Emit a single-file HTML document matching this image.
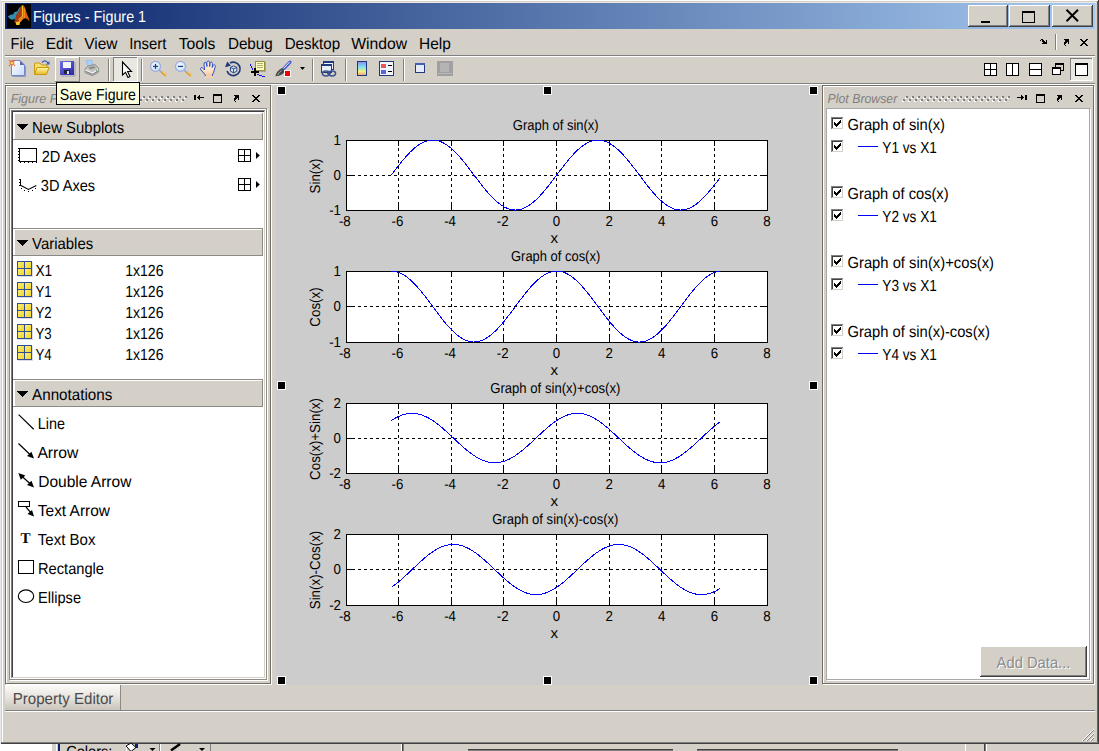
<!DOCTYPE html>
<html><head><meta charset="utf-8"><title>Figures - Figure 1</title>
<style>
html,body{margin:0;padding:0;background:#d4d0c8;overflow:hidden}
svg{display:block;position:absolute;left:0;top:0}
text{font-family:"Liberation Sans",sans-serif;white-space:pre;text-rendering:geometricPrecision}
rect,.ce{shape-rendering:crispEdges}
</style></head><body>
<svg width="1099" height="751" viewBox="0 0 1099 751">
<defs>
<linearGradient id="tg" x1="0" x2="1" y1="0" y2="0"><stop offset="0" stop-color="#0a246a"/><stop offset="1" stop-color="#a6caf0"/></linearGradient>
<linearGradient id="tabg" x1="0" x2="0" y1="0" y2="1"><stop offset="0" stop-color="#fdfcf9"/><stop offset="0.5" stop-color="#e6e3dd"/><stop offset="1" stop-color="#c9c5bc"/></linearGradient>
<linearGradient id="cbar" x1="0" x2="0" y1="0" y2="1"><stop offset="0" stop-color="#9080f0"/><stop offset="0.4" stop-color="#80e0f0"/><stop offset="0.7" stop-color="#f0f080"/><stop offset="1" stop-color="#f09080"/></linearGradient>
<linearGradient id="ycell" x1="0" x2="1" y1="0" y2="1"><stop offset="0" stop-color="#fbee7a"/><stop offset="1" stop-color="#f0d628"/></linearGradient>
<linearGradient id="flop" x1="0" x2="1" y1="0" y2="1"><stop offset="0" stop-color="#7070e8"/><stop offset="1" stop-color="#2828a0"/></linearGradient>
<linearGradient id="fold" x1="0" x2="0" y1="0" y2="1"><stop offset="0" stop-color="#fff8b0"/><stop offset="1" stop-color="#e8b820"/></linearGradient>
<linearGradient id="page" x1="0" x2="1" y1="0" y2="1"><stop offset="0" stop-color="#ffffff"/><stop offset="1" stop-color="#c8dcf8"/></linearGradient>
<radialGradient id="lensg" cx="0.45" cy="0.4" r="0.6"><stop offset="0" stop-color="#ffffff"/><stop offset="1" stop-color="#b4e6f0"/></radialGradient>
<linearGradient id="handg" x1="0" x2="0" y1="0" y2="1"><stop offset="0" stop-color="#fdeedd"/><stop offset="0.6" stop-color="#fde2c6"/><stop offset="1" stop-color="#f0c49c"/></linearGradient>
</defs>
<g>
<rect x="0" y="0" width="1099" height="751" fill="#d4d0c8" />
<rect x="0" y="0" width="1099" height="1" fill="#ffffff" />
<rect x="0" y="0" width="1" height="744" fill="#e8e8e8" />
<rect x="1" y="1" width="1096" height="1" fill="#d4d0c8" />
<rect x="1" y="1" width="1" height="742" fill="#d4d0c8" />
<rect x="2" y="2" width="1094" height="1" fill="#ece9e2" />
<rect x="2" y="2" width="1" height="740" fill="#ffffff" />
<rect x="4" y="3" width="1" height="26" fill="#e8e5dc" />
<rect x="1097" y="1" width="1" height="743" fill="#606060" />
<rect x="1098" y="0" width="1" height="744" fill="#404040" />
<rect x="1" y="742" width="1097" height="1" fill="#808080" />
<rect x="1" y="743" width="1098" height="1" fill="#404040" />
<rect x="5" y="3" width="1090" height="26" fill="url(#tg)" />
<rect x="7" y="4" width="24" height="24" fill="#000" />
<polygon points="7.8,16.4 10.5,14.8 13.5,14.2 14,12.3 17.3,11.3 18.8,8.5 20.6,6.2 20.6,9 19,12.8 16.5,15 16.5,18.8 11.5,19.8 9.5,18.6" fill="#3a9cc2" opacity="0.9"/>
<polygon points="14.3,21.5 16.5,15 19,10.5 21,6.3 22.2,5.2 22.2,19.5 20,22 17.5,24.5 15,23" fill="#a83a18"/>
<polygon points="21.9,5.2 23.5,5.4 23.5,18.3 21.9,20" fill="#f4b81c"/>
<polygon points="23.5,5.6 25,7.5 26.6,13 28.5,17.5 29.6,21.8 27.6,19.2 25.5,18.2 23.5,18.3" fill="#d85c18"/>
<polygon points="23.5,8 25,8.5 25.2,18.2 23.5,18.3" fill="#f08820"/>
<polygon points="18.5,18.5 22,16 23.5,18.3 21,21.5 19,23.2" fill="#e88420"/>
<polygon points="15.8,22 20,21.5 19.5,25 16.2,25" fill="#f8c828"/>
<text x="32.90" y="22.00" textLength="113.20" lengthAdjust="spacingAndGlyphs" fill="#fff" style="font-size:16px;" >Figures - Figure 1</text>
<rect x="968" y="5" width="40" height="22" fill="#d4d0c8" />
<rect x="968" y="5" width="40" height="1" fill="#ffffff" />
<rect x="968" y="5" width="1" height="22" fill="#ffffff" />
<rect x="968" y="26" width="40" height="1" fill="#404040" />
<rect x="1007" y="5" width="1" height="22" fill="#404040" />
<rect x="969" y="25" width="38" height="1" fill="#808080" />
<rect x="1006" y="6" width="1" height="20" fill="#808080" />
<rect x="1009" y="5" width="41" height="22" fill="#d4d0c8" />
<rect x="1009" y="5" width="41" height="1" fill="#ffffff" />
<rect x="1009" y="5" width="1" height="22" fill="#ffffff" />
<rect x="1009" y="26" width="41" height="1" fill="#404040" />
<rect x="1049" y="5" width="1" height="22" fill="#404040" />
<rect x="1010" y="25" width="39" height="1" fill="#808080" />
<rect x="1048" y="6" width="1" height="20" fill="#808080" />
<rect x="1052" y="5" width="41" height="22" fill="#d4d0c8" />
<rect x="1052" y="5" width="41" height="1" fill="#ffffff" />
<rect x="1052" y="5" width="1" height="22" fill="#ffffff" />
<rect x="1052" y="26" width="41" height="1" fill="#404040" />
<rect x="1092" y="5" width="1" height="22" fill="#404040" />
<rect x="1053" y="25" width="39" height="1" fill="#808080" />
<rect x="1091" y="6" width="1" height="20" fill="#808080" />
<rect x="981" y="21" width="9" height="2" fill="#000" />
<rect x="1022" y="11" width="13" height="12" fill="#000" />
<rect x="1023" y="13" width="11" height="9" fill="#d4d0c8" />
<path d="M1066.5 9.8 L1078 21.2 M1078 9.8 L1066.5 21.2" stroke="#000" stroke-width="2" fill="none"/>
<text x="10.60" y="49.00" textLength="23.40" lengthAdjust="spacingAndGlyphs" fill="#000" style="font-size:16px;" >File</text>
<text x="45.70" y="49.00" textLength="26.70" lengthAdjust="spacingAndGlyphs" fill="#000" style="font-size:16px;" >Edit</text>
<text x="84.20" y="49.00" textLength="33.20" lengthAdjust="spacingAndGlyphs" fill="#000" style="font-size:16px;" >View</text>
<text x="129.20" y="49.00" textLength="37.20" lengthAdjust="spacingAndGlyphs" fill="#000" style="font-size:16px;" >Insert</text>
<text x="178.70" y="49.00" textLength="36.70" lengthAdjust="spacingAndGlyphs" fill="#000" style="font-size:16px;" >Tools</text>
<text x="227.90" y="49.00" textLength="44.90" lengthAdjust="spacingAndGlyphs" fill="#000" style="font-size:16px;" >Debug</text>
<text x="284.70" y="49.00" textLength="55.40" lengthAdjust="spacingAndGlyphs" fill="#000" style="font-size:16px;" >Desktop</text>
<text x="351.20" y="49.00" textLength="55.90" lengthAdjust="spacingAndGlyphs" fill="#000" style="font-size:16px;" >Window</text>
<text x="419.00" y="49.00" textLength="31.80" lengthAdjust="spacingAndGlyphs" fill="#000" style="font-size:16px;" >Help</text>
<rect x="1055" y="34" width="1" height="16" fill="#808080" />
<rect x="1056" y="34" width="1" height="16" fill="#ffffff" />
<rect x="5" y="55" width="1090" height="1" fill="#808080" />
<rect x="5" y="56" width="1090" height="1" fill="#ffffff" />
<rect x="5" y="83" width="1090" height="1" fill="#808080" />
<rect x="5" y="84" width="1090" height="1" fill="#ffffff" />
<path d="M11.5 60.5 H20 L24.5 65 V75.5 H11.5 Z" fill="url(#page)" stroke="#7088d0" stroke-width="1"/>
<path d="M20 60.5 V65 H24.5 Z" fill="#5868b8"/>
<path d="M12.5 76.5 H25.5 V66" stroke="#7880a8" stroke-width="1" fill="none" opacity="0.7"/>
<circle cx="12" cy="63" r="1.9" fill="#f0d860" stroke="#e87040" stroke-width="1.1"/>
<path d="M9 60 l1 1 M15 60 l-1 1 M9 66 l1 -1 M15 66 l-1 -1" stroke="#e87040" stroke-width="1.1"/>
<path d="M34.5 74.5 V64 Q34.5 63 35.5 63 H40 L41.5 65 H47 V67" fill="#f8e070" stroke="#c89810" stroke-width="1"/>
<path d="M34.5 74.5 L37 67.5 H49 L46.5 74.5 Z" fill="url(#fold)" stroke="#c89810" stroke-width="1"/>
<path d="M42 62.5 Q45 59 48 63" stroke="#3858a8" stroke-width="1.2" fill="none"/><polygon points="46,64.5 49.5,64.5 49.5,61" fill="#3858a8"/>
<rect x="55" y="57" width="25" height="1" fill="#ffffff" />
<rect x="55" y="57" width="1" height="25" fill="#ffffff" />
<rect x="55" y="81" width="25" height="1" fill="#808080" />
<rect x="79" y="57" width="1" height="25" fill="#808080" />
<rect x="60" y="61" width="14" height="14" fill="url(#flop)" />
<rect x="63" y="62" width="8" height="6" fill="#f4f4fc" />
<rect x="64" y="70" width="6" height="4" fill="#202040" />
<rect x="67" y="71" width="2" height="3" fill="#e0e0f0" />
<path d="M61 76 H75 V62" stroke="#7878b0" stroke-width="1" fill="none" opacity="0.6"/>
<path d="M86 60.6 L91.4 60 L94 66.2 L88.2 67.3 Z" fill="#a8d0f8" stroke="#90b8e8" stroke-width="0.8"/>
<path d="M85 69.2 L87.6 66 L95 64.6 L98.6 68 V72 L92.6 75.6 L85 72.6 Z" fill="#c4c4c4" stroke="#8c8c8c" stroke-width="1"/>
<path d="M85.6 70 L92.6 73 L98.2 69.6" stroke="#f8f8f8" stroke-width="1.1" fill="none"/><path d="M85.6 71.4 L92.6 74.3 L98.2 70.9" stroke="#808080" stroke-width="0.9" fill="none"/>
<path d="M88 67.2 L94 66.2 L96 68 L90.5 69.6 Z" fill="#909090"/>
<rect x="96" y="70" width="1" height="1" fill="#40b040" />
<rect x="108" y="59" width="1" height="22" fill="#808080" />
<rect x="109" y="59" width="1" height="22" fill="#ffffff" />
<rect x="113" y="57" width="25" height="25" fill="#e9e7e2" />
<rect x="113" y="57" width="25" height="1" fill="#808080" />
<rect x="113" y="57" width="1" height="25" fill="#808080" />
<rect x="113" y="81" width="25" height="1" fill="#ffffff" />
<rect x="137" y="57" width="1" height="25" fill="#ffffff" />
<path d="M122.5 62 V75 L125.5 72.3 L128 77.5 L130 76.5 L127.6 71.5 H131.5 Z" fill="#fff" stroke="#000" stroke-width="1.1"/>
<rect x="141" y="59" width="1" height="22" fill="#808080" />
<rect x="142" y="59" width="1" height="22" fill="#ffffff" />
<path d="M159.1 70.0 L162.3 73.0" stroke="#9ca0cc" stroke-width="1.4"/>
<path d="M161.7 72.0 L166.1 75.80000000000001" stroke="#e8a030" stroke-width="2.6"/>
<path d="M162.4 71.60000000000001 L166.7 75.30000000000001" stroke="#f8deb0" stroke-width="0.8"/>
<circle cx="155.5" cy="66.4" r="5" fill="url(#lensg)" stroke="#a4a4e4" stroke-width="1.2"/>
<path d="M153.0 66.4 H158.0" stroke="#283888" stroke-width="1.3"/>
<path d="M155.5 63.900000000000006 V68.9" stroke="#283888" stroke-width="1.3"/>
<path d="M184.1 70.0 L187.3 73.0" stroke="#9ca0cc" stroke-width="1.4"/>
<path d="M186.7 72.0 L191.1 75.80000000000001" stroke="#e8a030" stroke-width="2.6"/>
<path d="M187.4 71.60000000000001 L191.7 75.30000000000001" stroke="#f8deb0" stroke-width="0.8"/>
<circle cx="180.5" cy="66.4" r="5" fill="url(#lensg)" stroke="#a4a4e4" stroke-width="1.2"/>
<path d="M178.0 66.4 H183.0" stroke="#283888" stroke-width="1.3"/>
<path d="M205.5 77 L205 74.5 L201 70 Q199.8 68.2 201.2 67.6 Q202.4 67.3 203.4 68.6 L204.6 70 L204 64 Q204 62.4 205.2 62.4 Q206.3 62.4 206.5 64 L206.9 66.5 L206.9 62.4 Q207 61 208.2 61 Q209.4 61 209.5 62.4 L209.7 66.5 L210 63.2 Q210.2 61.9 211.3 62 Q212.4 62.1 212.4 63.5 L212.3 67.5 L213 65.5 Q213.6 64.4 214.6 64.8 Q215.6 65.3 215.2 66.8 L213.6 72.5 L212.4 75 L212.4 77 Z" fill="url(#handg)" stroke="#2c50c4" stroke-width="1"/>
<rect x="205" y="76" width="8" height="2" fill="#f4d0ac" />
<path d="M230.05 63.05 A6.7 6.7 0 1 1 227.03 70.92" fill="none" stroke="#203878" stroke-width="1.7"/>
<polygon points="225,67.3 227.3,61.6 230.8,65.8" fill="#203878"/>
<path d="M230.5 67.3 L233.6 66 L236.8 67.3 V71.2 L233.6 72.8 L230.5 71.2 Z" fill="#dfe8f8" stroke="#304888" stroke-width="1"/><path d="M230.5 67.5 L233.6 68.8 L236.8 67.5 M233.6 68.8 V72.8" fill="none" stroke="#304888" stroke-width="1"/>
<rect x="256" y="62" width="10" height="10" fill="#a8a8a0" />
<rect x="255" y="61" width="10" height="10" fill="#fcfbc4" />
<rect x="255" y="61" width="10" height="1" fill="#94903c" />
<rect x="255" y="70" width="10" height="1" fill="#94903c" />
<rect x="255" y="61" width="1" height="10" fill="#94903c" />
<rect x="264" y="61" width="1" height="10" fill="#94903c" />
<rect x="257" y="63" width="6" height="1" fill="#b4b070" />
<rect x="257" y="65" width="6" height="1" fill="#b4b070" />
<rect x="257" y="67" width="6" height="1" fill="#b4b070" />
<rect x="250" y="64" width="1" height="2" fill="#1010ff" />
<rect x="251" y="66" width="1" height="2" fill="#1010ff" />
<rect x="252" y="68" width="1" height="2" fill="#1010ff" />
<rect x="257" y="74" width="2" height="1" fill="#1010ff" />
<rect x="259" y="75" width="3" height="1" fill="#1010ff" />
<rect x="262" y="76" width="3" height="1" fill="#1010ff" />
<rect x="251" y="71" width="8" height="2" fill="#000" />
<rect x="254" y="68" width="2" height="8" fill="#000" />
<path d="M290 62.2 L283.4 69.2" stroke="#4c5ccc" stroke-width="3.2" stroke-linecap="round"/><path d="M289.6 62 L283.6 68.4" stroke="#eef0ff" stroke-width="1"/>
<path d="M282 68 L285 71 Q283.6 75.6 275.3 76.2 Q276 71.6 282 68 Z" fill="#4a4a4a"/><path d="M281.5 70.5 Q279 72.5 277.5 75" stroke="#b0b0b0" stroke-width="0.9" fill="none"/>
<rect x="284" y="70" width="7" height="7" fill="#ffffff" />
<rect x="285" y="71" width="5" height="5" fill="#f00000" />
<polygon points="300,67 305,67 302.5,70" fill="#000"/>
<rect x="312" y="59" width="1" height="22" fill="#808080" />
<rect x="313" y="59" width="1" height="22" fill="#ffffff" />
<rect x="323" y="61" width="11" height="9" fill="#f0f4fc" />
<rect x="323" y="61" width="11" height="1" fill="#203880" />
<rect x="323" y="69" width="11" height="1" fill="#203880" />
<rect x="323" y="61" width="1" height="9" fill="#203880" />
<rect x="333" y="61" width="1" height="9" fill="#203880" />
<rect x="323" y="61" width="11" height="2" fill="#203880" />
<rect x="321" y="64" width="11" height="9" fill="#e8eefa" />
<rect x="321" y="64" width="11" height="1" fill="#203880" />
<rect x="321" y="72" width="11" height="1" fill="#203880" />
<rect x="321" y="64" width="1" height="9" fill="#203880" />
<rect x="331" y="64" width="1" height="9" fill="#203880" />
<rect x="321" y="64" width="11" height="2" fill="#203880" />
<ellipse cx="326" cy="73.5" rx="3.6" ry="2.4" fill="none" stroke="#3c5490" stroke-width="1.5"/><ellipse cx="332" cy="73.5" rx="3.6" ry="2.4" fill="none" stroke="#3c5490" stroke-width="1.5"/><path d="M327 73.5 H331" stroke="#405080" stroke-width="1.4"/>
<rect x="345" y="59" width="1" height="22" fill="#808080" />
<rect x="346" y="59" width="1" height="22" fill="#ffffff" />
<rect x="357" y="61" width="10" height="15" fill="url(#cbar)" />
<rect x="357" y="61" width="10" height="1" fill="#203878" />
<rect x="357" y="75" width="10" height="1" fill="#203878" />
<rect x="357" y="61" width="1" height="15" fill="#203878" />
<rect x="366" y="61" width="1" height="15" fill="#203878" />
<rect x="379" y="61" width="15" height="15" fill="#f0f4fc" />
<rect x="379" y="61" width="15" height="1" fill="#203878" />
<rect x="379" y="75" width="15" height="1" fill="#203878" />
<rect x="379" y="61" width="1" height="15" fill="#203878" />
<rect x="393" y="61" width="1" height="15" fill="#203878" />
<rect x="381" y="64" width="5" height="4" fill="#e85858" />
<rect x="381" y="70" width="5" height="4" fill="#6060e0" />
<rect x="388" y="65" width="4" height="1" fill="#000" />
<rect x="388" y="71" width="4" height="1" fill="#000" />
<rect x="403" y="59" width="1" height="22" fill="#808080" />
<rect x="404" y="59" width="1" height="22" fill="#ffffff" />
<rect x="415" y="63" width="10" height="10" fill="#e4ecfa" />
<rect x="415" y="63" width="10" height="1" fill="#203878" />
<rect x="415" y="72" width="10" height="1" fill="#203878" />
<rect x="415" y="63" width="1" height="10" fill="#203878" />
<rect x="424" y="63" width="1" height="10" fill="#203878" />
<rect x="415" y="63" width="10" height="2" fill="#4060b8" />
<rect x="437" y="61" width="16" height="15" fill="#a0a0a0" />
<rect x="440" y="63" width="9" height="9" fill="#b4b4b4" />
<rect x="438" y="73" width="14" height="1" fill="#b8b8b8" />
<rect x="984" y="63" width="13" height="13" fill="#ffffff" />
<rect x="984" y="63" width="13" height="1" fill="#000" />
<rect x="984" y="75" width="13" height="1" fill="#000" />
<rect x="984" y="63" width="1" height="13" fill="#000" />
<rect x="996" y="63" width="1" height="13" fill="#000" />
<rect x="990" y="63" width="1" height="13" fill="#000" />
<rect x="984" y="69" width="13" height="1" fill="#000" />
<rect x="1006" y="63" width="13" height="13" fill="#ffffff" />
<rect x="1006" y="63" width="13" height="1" fill="#000" />
<rect x="1006" y="75" width="13" height="1" fill="#000" />
<rect x="1006" y="63" width="1" height="13" fill="#000" />
<rect x="1018" y="63" width="1" height="13" fill="#000" />
<rect x="1012" y="63" width="1" height="13" fill="#000" />
<rect x="1029" y="63" width="13" height="13" fill="#ffffff" />
<rect x="1029" y="63" width="13" height="1" fill="#000" />
<rect x="1029" y="75" width="13" height="1" fill="#000" />
<rect x="1029" y="63" width="1" height="13" fill="#000" />
<rect x="1041" y="63" width="1" height="13" fill="#000" />
<rect x="1029" y="69" width="13" height="1" fill="#000" />
<rect x="1055" y="63" width="9" height="8" fill="#d4d0c8" />
<rect x="1055" y="63" width="9" height="1" fill="#000" />
<rect x="1055" y="70" width="9" height="1" fill="#000" />
<rect x="1055" y="63" width="1" height="8" fill="#000" />
<rect x="1063" y="63" width="1" height="8" fill="#000" />
<rect x="1055" y="64" width="9" height="1" fill="#000" />
<rect x="1052" y="67" width="9" height="8" fill="#ffffff" />
<rect x="1052" y="67" width="9" height="1" fill="#000" />
<rect x="1052" y="74" width="9" height="1" fill="#000" />
<rect x="1052" y="67" width="1" height="8" fill="#000" />
<rect x="1060" y="67" width="1" height="8" fill="#000" />
<rect x="1052" y="68" width="9" height="1" fill="#000" />
<rect x="1070" y="58" width="23" height="23" fill="#e9e7e2" />
<rect x="1070" y="58" width="23" height="1" fill="#808080" />
<rect x="1070" y="58" width="1" height="23" fill="#808080" />
<rect x="1070" y="80" width="23" height="1" fill="#ffffff" />
<rect x="1092" y="58" width="1" height="23" fill="#ffffff" />
<rect x="1075" y="63" width="13" height="13" fill="#ffffff" />
<rect x="1075" y="63" width="13" height="1" fill="#000" />
<rect x="1075" y="75" width="13" height="1" fill="#000" />
<rect x="1075" y="63" width="1" height="13" fill="#000" />
<rect x="1087" y="63" width="1" height="13" fill="#000" />
<rect x="1075" y="64" width="13" height="1" fill="#000" />
<rect x="276" y="85" width="543" height="600" fill="#cccccc" />
<rect x="346" y="140" width="422" height="71" fill="#ffffff" />
<path class="ce" d="M398.5 211 V141 M451.5 211 V141 M503.5 211 V141 M556.5 211 V141 M609.5 211 V141 M661.5 211 V141 M714.5 211 V141 M346 175.5 H767" stroke="#000" stroke-width="1" stroke-dasharray="3 3" fill="none"/>
<rect x="346" y="140" width="422" height="1" fill="#000" />
<rect x="346" y="210" width="422" height="1" fill="#000" />
<rect x="346" y="140" width="1" height="71" fill="#000" />
<rect x="767" y="140" width="1" height="71" fill="#000" />
<text x="344.80" y="226.00" text-anchor="middle" textLength="11.85" lengthAdjust="spacingAndGlyphs" fill="#000" style="font-size:14.5px;" >-8</text>
<rect x="398" y="205" width="1" height="6" fill="#000" />
<rect x="398" y="140" width="1" height="6" fill="#000" />
<text x="397.43" y="226.00" text-anchor="middle" textLength="11.85" lengthAdjust="spacingAndGlyphs" fill="#000" style="font-size:14.5px;" >-6</text>
<rect x="451" y="205" width="1" height="6" fill="#000" />
<rect x="451" y="140" width="1" height="6" fill="#000" />
<text x="450.05" y="226.00" text-anchor="middle" textLength="11.85" lengthAdjust="spacingAndGlyphs" fill="#000" style="font-size:14.5px;" >-4</text>
<rect x="503" y="205" width="1" height="6" fill="#000" />
<rect x="503" y="140" width="1" height="6" fill="#000" />
<text x="502.68" y="226.00" text-anchor="middle" textLength="11.85" lengthAdjust="spacingAndGlyphs" fill="#000" style="font-size:14.5px;" >-2</text>
<rect x="556" y="205" width="1" height="6" fill="#000" />
<rect x="556" y="140" width="1" height="6" fill="#000" />
<text x="556.50" y="226.00" text-anchor="middle" textLength="7.41" lengthAdjust="spacingAndGlyphs" fill="#000" style="font-size:14.5px;" >0</text>
<rect x="609" y="205" width="1" height="6" fill="#000" />
<rect x="609" y="140" width="1" height="6" fill="#000" />
<text x="609.12" y="226.00" text-anchor="middle" textLength="7.41" lengthAdjust="spacingAndGlyphs" fill="#000" style="font-size:14.5px;" >2</text>
<rect x="661" y="205" width="1" height="6" fill="#000" />
<rect x="661" y="140" width="1" height="6" fill="#000" />
<text x="661.75" y="226.00" text-anchor="middle" textLength="7.41" lengthAdjust="spacingAndGlyphs" fill="#000" style="font-size:14.5px;" >4</text>
<rect x="714" y="205" width="1" height="6" fill="#000" />
<rect x="714" y="140" width="1" height="6" fill="#000" />
<text x="714.38" y="226.00" text-anchor="middle" textLength="7.41" lengthAdjust="spacingAndGlyphs" fill="#000" style="font-size:14.5px;" >6</text>
<text x="767.00" y="226.00" text-anchor="middle" textLength="7.41" lengthAdjust="spacingAndGlyphs" fill="#000" style="font-size:14.5px;" >8</text>
<text x="341.00" y="145.00" text-anchor="end" textLength="7.41" lengthAdjust="spacingAndGlyphs" fill="#000" style="font-size:14.5px;" >1</text>
<rect x="346" y="175" width="6" height="1" fill="#000" />
<rect x="762" y="175" width="6" height="1" fill="#000" />
<text x="341.00" y="180.00" text-anchor="end" textLength="7.41" lengthAdjust="spacingAndGlyphs" fill="#000" style="font-size:14.5px;" >0</text>
<text x="341.00" y="215.00" text-anchor="end" textLength="11.85" lengthAdjust="spacingAndGlyphs" fill="#000" style="font-size:14.5px;" >-1</text>
<text x="512.80" y="130.00" textLength="85.90" lengthAdjust="spacingAndGlyphs" fill="#000" style="font-size:14.5px;" >Graph of sin(x)</text>
<text x="550.60" y="243.00" textLength="7.60" lengthAdjust="spacingAndGlyphs" fill="#000" style="font-size:14.5px;" >x</text>
<text transform="translate(320,176) rotate(-90)" text-anchor="middle" textLength="34.81" lengthAdjust="spacingAndGlyphs" fill="#000" style="font-size:14.5px">Sin(x)</text>
<rect x="346" y="271" width="422" height="72" fill="#ffffff" />
<path class="ce" d="M398.5 343 V272 M451.5 343 V272 M503.5 343 V272 M556.5 343 V272 M609.5 343 V272 M661.5 343 V272 M714.5 343 V272 M346 306.5 H767" stroke="#000" stroke-width="1" stroke-dasharray="3 3" fill="none"/>
<rect x="346" y="271" width="422" height="1" fill="#000" />
<rect x="346" y="342" width="422" height="1" fill="#000" />
<rect x="346" y="271" width="1" height="72" fill="#000" />
<rect x="767" y="271" width="1" height="72" fill="#000" />
<text x="344.80" y="358.00" text-anchor="middle" textLength="11.85" lengthAdjust="spacingAndGlyphs" fill="#000" style="font-size:14.5px;" >-8</text>
<rect x="398" y="337" width="1" height="6" fill="#000" />
<rect x="398" y="271" width="1" height="6" fill="#000" />
<text x="397.43" y="358.00" text-anchor="middle" textLength="11.85" lengthAdjust="spacingAndGlyphs" fill="#000" style="font-size:14.5px;" >-6</text>
<rect x="451" y="337" width="1" height="6" fill="#000" />
<rect x="451" y="271" width="1" height="6" fill="#000" />
<text x="450.05" y="358.00" text-anchor="middle" textLength="11.85" lengthAdjust="spacingAndGlyphs" fill="#000" style="font-size:14.5px;" >-4</text>
<rect x="503" y="337" width="1" height="6" fill="#000" />
<rect x="503" y="271" width="1" height="6" fill="#000" />
<text x="502.68" y="358.00" text-anchor="middle" textLength="11.85" lengthAdjust="spacingAndGlyphs" fill="#000" style="font-size:14.5px;" >-2</text>
<rect x="556" y="337" width="1" height="6" fill="#000" />
<rect x="556" y="271" width="1" height="6" fill="#000" />
<text x="556.50" y="358.00" text-anchor="middle" textLength="7.41" lengthAdjust="spacingAndGlyphs" fill="#000" style="font-size:14.5px;" >0</text>
<rect x="609" y="337" width="1" height="6" fill="#000" />
<rect x="609" y="271" width="1" height="6" fill="#000" />
<text x="609.12" y="358.00" text-anchor="middle" textLength="7.41" lengthAdjust="spacingAndGlyphs" fill="#000" style="font-size:14.5px;" >2</text>
<rect x="661" y="337" width="1" height="6" fill="#000" />
<rect x="661" y="271" width="1" height="6" fill="#000" />
<text x="661.75" y="358.00" text-anchor="middle" textLength="7.41" lengthAdjust="spacingAndGlyphs" fill="#000" style="font-size:14.5px;" >4</text>
<rect x="714" y="337" width="1" height="6" fill="#000" />
<rect x="714" y="271" width="1" height="6" fill="#000" />
<text x="714.38" y="358.00" text-anchor="middle" textLength="7.41" lengthAdjust="spacingAndGlyphs" fill="#000" style="font-size:14.5px;" >6</text>
<text x="767.00" y="358.00" text-anchor="middle" textLength="7.41" lengthAdjust="spacingAndGlyphs" fill="#000" style="font-size:14.5px;" >8</text>
<text x="341.00" y="276.00" text-anchor="end" textLength="7.41" lengthAdjust="spacingAndGlyphs" fill="#000" style="font-size:14.5px;" >1</text>
<rect x="346" y="306" width="6" height="1" fill="#000" />
<rect x="762" y="306" width="6" height="1" fill="#000" />
<text x="341.00" y="311.00" text-anchor="end" textLength="7.41" lengthAdjust="spacingAndGlyphs" fill="#000" style="font-size:14.5px;" >0</text>
<text x="341.00" y="347.00" text-anchor="end" textLength="11.85" lengthAdjust="spacingAndGlyphs" fill="#000" style="font-size:14.5px;" >-1</text>
<text x="511.00" y="261.00" textLength="89.20" lengthAdjust="spacingAndGlyphs" fill="#000" style="font-size:14.5px;" >Graph of cos(x)</text>
<text x="550.60" y="375.00" textLength="7.60" lengthAdjust="spacingAndGlyphs" fill="#000" style="font-size:14.5px;" >x</text>
<text transform="translate(320,307) rotate(-90)" text-anchor="middle" textLength="39.25" lengthAdjust="spacingAndGlyphs" fill="#000" style="font-size:14.5px">Cos(x)</text>
<rect x="346" y="403" width="422" height="71" fill="#ffffff" />
<path class="ce" d="M398.5 474 V404 M451.5 474 V404 M503.5 474 V404 M556.5 474 V404 M609.5 474 V404 M661.5 474 V404 M714.5 474 V404 M346 438.5 H767" stroke="#000" stroke-width="1" stroke-dasharray="3 3" fill="none"/>
<rect x="346" y="403" width="422" height="1" fill="#000" />
<rect x="346" y="473" width="422" height="1" fill="#000" />
<rect x="346" y="403" width="1" height="71" fill="#000" />
<rect x="767" y="403" width="1" height="71" fill="#000" />
<text x="344.80" y="489.00" text-anchor="middle" textLength="11.85" lengthAdjust="spacingAndGlyphs" fill="#000" style="font-size:14.5px;" >-8</text>
<rect x="398" y="468" width="1" height="6" fill="#000" />
<rect x="398" y="403" width="1" height="6" fill="#000" />
<text x="397.43" y="489.00" text-anchor="middle" textLength="11.85" lengthAdjust="spacingAndGlyphs" fill="#000" style="font-size:14.5px;" >-6</text>
<rect x="451" y="468" width="1" height="6" fill="#000" />
<rect x="451" y="403" width="1" height="6" fill="#000" />
<text x="450.05" y="489.00" text-anchor="middle" textLength="11.85" lengthAdjust="spacingAndGlyphs" fill="#000" style="font-size:14.5px;" >-4</text>
<rect x="503" y="468" width="1" height="6" fill="#000" />
<rect x="503" y="403" width="1" height="6" fill="#000" />
<text x="502.68" y="489.00" text-anchor="middle" textLength="11.85" lengthAdjust="spacingAndGlyphs" fill="#000" style="font-size:14.5px;" >-2</text>
<rect x="556" y="468" width="1" height="6" fill="#000" />
<rect x="556" y="403" width="1" height="6" fill="#000" />
<text x="556.50" y="489.00" text-anchor="middle" textLength="7.41" lengthAdjust="spacingAndGlyphs" fill="#000" style="font-size:14.5px;" >0</text>
<rect x="609" y="468" width="1" height="6" fill="#000" />
<rect x="609" y="403" width="1" height="6" fill="#000" />
<text x="609.12" y="489.00" text-anchor="middle" textLength="7.41" lengthAdjust="spacingAndGlyphs" fill="#000" style="font-size:14.5px;" >2</text>
<rect x="661" y="468" width="1" height="6" fill="#000" />
<rect x="661" y="403" width="1" height="6" fill="#000" />
<text x="661.75" y="489.00" text-anchor="middle" textLength="7.41" lengthAdjust="spacingAndGlyphs" fill="#000" style="font-size:14.5px;" >4</text>
<rect x="714" y="468" width="1" height="6" fill="#000" />
<rect x="714" y="403" width="1" height="6" fill="#000" />
<text x="714.38" y="489.00" text-anchor="middle" textLength="7.41" lengthAdjust="spacingAndGlyphs" fill="#000" style="font-size:14.5px;" >6</text>
<text x="767.00" y="489.00" text-anchor="middle" textLength="7.41" lengthAdjust="spacingAndGlyphs" fill="#000" style="font-size:14.5px;" >8</text>
<text x="341.00" y="408.00" text-anchor="end" textLength="7.41" lengthAdjust="spacingAndGlyphs" fill="#000" style="font-size:14.5px;" >2</text>
<rect x="346" y="438" width="6" height="1" fill="#000" />
<rect x="762" y="438" width="6" height="1" fill="#000" />
<text x="341.00" y="443.00" text-anchor="end" textLength="7.41" lengthAdjust="spacingAndGlyphs" fill="#000" style="font-size:14.5px;" >0</text>
<text x="341.00" y="478.00" text-anchor="end" textLength="11.85" lengthAdjust="spacingAndGlyphs" fill="#000" style="font-size:14.5px;" >-2</text>
<text x="490.20" y="393.00" textLength="130.20" lengthAdjust="spacingAndGlyphs" fill="#000" style="font-size:14.5px;" >Graph of sin(x)+cos(x)</text>
<text x="550.60" y="506.00" textLength="7.60" lengthAdjust="spacingAndGlyphs" fill="#000" style="font-size:14.5px;" >x</text>
<text transform="translate(320,439) rotate(-90)" text-anchor="middle" textLength="81.84" lengthAdjust="spacingAndGlyphs" fill="#000" style="font-size:14.5px">Cos(x)+Sin(x)</text>
<rect x="346" y="534" width="422" height="72" fill="#ffffff" />
<path class="ce" d="M398.5 606 V535 M451.5 606 V535 M503.5 606 V535 M556.5 606 V535 M609.5 606 V535 M661.5 606 V535 M714.5 606 V535 M346 569.5 H767" stroke="#000" stroke-width="1" stroke-dasharray="3 3" fill="none"/>
<rect x="346" y="534" width="422" height="1" fill="#000" />
<rect x="346" y="605" width="422" height="1" fill="#000" />
<rect x="346" y="534" width="1" height="72" fill="#000" />
<rect x="767" y="534" width="1" height="72" fill="#000" />
<text x="344.80" y="621.00" text-anchor="middle" textLength="11.85" lengthAdjust="spacingAndGlyphs" fill="#000" style="font-size:14.5px;" >-8</text>
<rect x="398" y="600" width="1" height="6" fill="#000" />
<rect x="398" y="534" width="1" height="6" fill="#000" />
<text x="397.43" y="621.00" text-anchor="middle" textLength="11.85" lengthAdjust="spacingAndGlyphs" fill="#000" style="font-size:14.5px;" >-6</text>
<rect x="451" y="600" width="1" height="6" fill="#000" />
<rect x="451" y="534" width="1" height="6" fill="#000" />
<text x="450.05" y="621.00" text-anchor="middle" textLength="11.85" lengthAdjust="spacingAndGlyphs" fill="#000" style="font-size:14.5px;" >-4</text>
<rect x="503" y="600" width="1" height="6" fill="#000" />
<rect x="503" y="534" width="1" height="6" fill="#000" />
<text x="502.68" y="621.00" text-anchor="middle" textLength="11.85" lengthAdjust="spacingAndGlyphs" fill="#000" style="font-size:14.5px;" >-2</text>
<rect x="556" y="600" width="1" height="6" fill="#000" />
<rect x="556" y="534" width="1" height="6" fill="#000" />
<text x="556.50" y="621.00" text-anchor="middle" textLength="7.41" lengthAdjust="spacingAndGlyphs" fill="#000" style="font-size:14.5px;" >0</text>
<rect x="609" y="600" width="1" height="6" fill="#000" />
<rect x="609" y="534" width="1" height="6" fill="#000" />
<text x="609.12" y="621.00" text-anchor="middle" textLength="7.41" lengthAdjust="spacingAndGlyphs" fill="#000" style="font-size:14.5px;" >2</text>
<rect x="661" y="600" width="1" height="6" fill="#000" />
<rect x="661" y="534" width="1" height="6" fill="#000" />
<text x="661.75" y="621.00" text-anchor="middle" textLength="7.41" lengthAdjust="spacingAndGlyphs" fill="#000" style="font-size:14.5px;" >4</text>
<rect x="714" y="600" width="1" height="6" fill="#000" />
<rect x="714" y="534" width="1" height="6" fill="#000" />
<text x="714.38" y="621.00" text-anchor="middle" textLength="7.41" lengthAdjust="spacingAndGlyphs" fill="#000" style="font-size:14.5px;" >6</text>
<text x="767.00" y="621.00" text-anchor="middle" textLength="7.41" lengthAdjust="spacingAndGlyphs" fill="#000" style="font-size:14.5px;" >8</text>
<text x="341.00" y="539.00" text-anchor="end" textLength="7.41" lengthAdjust="spacingAndGlyphs" fill="#000" style="font-size:14.5px;" >2</text>
<rect x="346" y="569" width="6" height="1" fill="#000" />
<rect x="762" y="569" width="6" height="1" fill="#000" />
<text x="341.00" y="574.00" text-anchor="end" textLength="7.41" lengthAdjust="spacingAndGlyphs" fill="#000" style="font-size:14.5px;" >0</text>
<text x="341.00" y="610.00" text-anchor="end" textLength="11.85" lengthAdjust="spacingAndGlyphs" fill="#000" style="font-size:14.5px;" >-2</text>
<text x="492.20" y="524.00" textLength="126.20" lengthAdjust="spacingAndGlyphs" fill="#000" style="font-size:14.5px;" >Graph of sin(x)-cos(x)</text>
<text x="550.60" y="638.00" textLength="7.60" lengthAdjust="spacingAndGlyphs" fill="#000" style="font-size:14.5px;" >x</text>
<text transform="translate(320,570) rotate(-90)" text-anchor="middle" textLength="78.49" lengthAdjust="spacingAndGlyphs" fill="#000" style="font-size:14.5px">Sin(x)-Cos(x)</text>
<polyline class="ce" points="391.37,175.05 394.00,171.56 396.64,168.10 399.27,164.71 401.90,161.42 404.53,158.27 407.16,155.29 409.79,152.50 412.42,149.94 415.05,147.63 417.69,145.60 420.32,143.86 422.95,142.43 425.58,141.33 428.21,140.56 430.84,140.14 433.47,140.06 436.10,140.34 438.74,140.97 441.37,141.93 444.00,143.22 446.63,144.84 449.26,146.75 451.89,148.95 454.52,151.41 457.15,154.10 459.79,157.01 462.42,160.09 465.05,163.33 467.68,166.68 470.31,170.11 472.94,173.59 475.57,177.09 478.20,180.57 480.84,183.99 483.47,187.33 486.10,190.54 488.73,193.59 491.36,196.47 493.99,199.12 496.62,201.54 499.25,203.69 501.89,205.56 504.52,207.12 507.15,208.36 509.78,209.26 512.41,209.83 515.04,210.05 517.67,209.92 520.30,209.44 522.94,208.61 525.57,207.45 528.20,205.97 530.83,204.18 533.46,202.10 536.09,199.74 538.72,197.14 541.35,194.32 543.99,191.31 546.62,188.14 549.25,184.83 551.88,181.43 554.51,177.96 557.14,174.46 559.77,170.97 562.40,167.52 565.04,164.15 567.67,160.88 570.30,157.76 572.93,154.80 575.56,152.06 578.19,149.54 580.82,147.27 583.45,145.28 586.09,143.60 588.72,142.22 591.35,141.17 593.98,140.46 596.61,140.10 599.24,140.09 601.87,140.42 604.50,141.10 607.14,142.12 609.77,143.47 612.40,145.14 615.03,147.10 617.66,149.35 620.29,151.85 622.92,154.58 625.55,157.51 628.19,160.63 630.82,163.88 633.45,167.25 636.08,170.69 638.71,174.18 641.34,177.68 643.97,181.15 646.60,184.56 649.24,187.88 651.87,191.06 654.50,194.09 657.13,196.93 659.76,199.55 662.39,201.92 665.02,204.02 667.65,205.84 670.29,207.35 672.92,208.53 675.55,209.38 678.18,209.89 680.81,210.05 683.44,209.86 686.07,209.32 688.70,208.44 691.34,207.23 693.97,205.69 696.60,203.85 699.23,201.72 701.86,199.32 704.49,196.68 707.12,193.83 709.75,190.79 712.39,187.59 715.02,184.26 717.65,180.85 720.28,177.37" fill="none" stroke="#0000ff" stroke-width="1"/>
<polyline class="ce" points="391.37,271.05 394.00,271.23 396.64,271.76 399.27,272.64 401.90,273.85 404.53,275.40 407.16,277.25 409.79,279.40 412.42,281.82 415.05,284.48 417.69,287.37 420.32,290.45 422.95,293.69 425.58,297.05 428.21,300.52 430.84,304.04 433.47,307.59 436.10,311.12 438.74,314.62 441.37,318.03 444.00,321.32 446.63,324.47 449.26,327.44 451.89,330.20 454.52,332.73 457.15,334.99 459.79,336.97 462.42,338.64 465.05,340.00 467.68,341.02 470.31,341.69 472.94,342.02 475.57,341.99 478.20,341.61 480.84,340.87 483.47,339.79 486.10,338.38 488.73,336.66 491.36,334.63 493.99,332.32 496.62,329.75 499.25,326.96 501.89,323.95 504.52,320.78 507.15,317.46 509.78,314.03 512.41,310.53 515.04,306.99 517.67,303.44 520.30,299.93 522.94,296.48 525.57,293.13 528.20,289.92 530.83,286.87 533.46,284.02 536.09,281.39 538.72,279.02 541.35,276.92 543.99,275.11 546.62,273.62 549.25,272.46 551.88,271.64 554.51,271.17 557.14,271.06 559.77,271.29 562.40,271.88 565.04,272.82 567.67,274.09 570.30,275.69 572.93,277.59 575.56,279.79 578.19,282.25 580.82,284.95 583.45,287.87 586.09,290.98 588.72,294.24 591.35,297.63 593.98,301.11 596.61,304.63 599.24,308.18 601.87,311.72 604.50,315.20 607.14,318.59 609.77,321.86 612.40,324.98 615.03,327.92 617.66,330.64 620.29,333.13 622.92,335.34 625.55,337.27 628.19,338.90 630.82,340.19 633.45,341.16 636.08,341.77 638.71,342.04 641.34,341.95 643.97,341.51 646.60,340.71 649.24,339.58 651.87,338.12 654.50,336.34 657.13,334.26 659.76,331.91 662.39,329.30 665.02,326.46 667.65,323.43 670.29,320.23 672.92,316.89 675.55,313.45 678.18,309.94 680.81,306.39 683.44,302.85 686.07,299.34 688.70,295.91 691.34,292.58 693.97,289.39 696.60,286.38 699.23,283.56 701.86,280.97 704.49,278.64 707.12,276.59 709.75,274.84 712.39,273.41 715.02,272.30 717.65,271.54 720.28,271.13" fill="none" stroke="#0000ff" stroke-width="1"/>
<polyline class="ce" points="391.37,420.55 394.00,418.89 396.64,417.42 399.27,416.16 401.90,415.12 404.53,414.30 407.16,413.73 409.79,413.39 412.42,413.30 415.05,413.46 417.69,413.87 420.32,414.52 422.95,415.40 425.58,416.51 428.21,417.83 430.84,419.36 433.47,421.07 436.10,422.95 438.74,424.98 441.37,427.15 444.00,429.42 446.63,431.78 449.26,434.20 451.89,436.66 454.52,439.13 457.15,441.60 459.79,444.02 462.42,446.39 465.05,448.68 467.68,450.85 470.31,452.91 472.94,454.81 475.57,456.54 478.20,458.09 480.84,459.44 483.47,460.58 486.10,461.49 488.73,462.16 491.36,462.60 493.99,462.79 496.62,462.73 499.25,462.43 501.89,461.88 504.52,461.10 507.15,460.08 509.78,458.85 512.41,457.40 515.04,455.77 517.67,453.95 520.30,451.98 522.94,449.87 525.57,447.64 528.20,445.31 530.83,442.91 533.46,440.47 536.09,438.00 538.72,435.52 541.35,433.08 543.99,430.68 546.62,428.36 549.25,426.14 551.88,424.03 554.51,422.06 557.14,420.26 559.77,418.63 562.40,417.20 565.04,415.97 567.67,414.96 570.30,414.19 572.93,413.65 575.56,413.36 578.19,413.31 580.82,413.51 583.45,413.96 586.09,414.65 588.72,415.57 591.35,416.71 593.98,418.07 596.61,419.63 599.24,421.37 601.87,423.28 604.50,425.34 607.14,427.52 609.77,429.81 612.40,432.18 615.03,434.61 617.66,437.08 620.29,439.55 622.92,442.01 625.55,444.43 628.19,446.78 630.82,449.05 633.45,451.21 636.08,453.24 638.71,455.11 641.34,456.82 643.97,458.33 646.60,459.65 649.24,460.75 651.87,461.62 654.50,462.25 657.13,462.65 659.76,462.80 662.39,462.70 665.02,462.35 667.65,461.77 670.29,460.94 672.92,459.89 675.55,458.62 678.18,457.14 680.81,455.47 683.44,453.63 686.07,451.63 688.70,449.50 691.34,447.25 693.97,444.91 696.60,442.50 699.23,440.05 701.86,437.58 704.49,435.11 707.12,432.67 709.75,430.29 712.39,427.98 715.02,425.77 717.65,423.69 720.28,421.75" fill="none" stroke="#0000ff" stroke-width="1"/>
<polyline class="ce" points="391.37,587.30 394.00,585.44 396.64,583.42 399.27,581.26 401.90,578.99 404.53,576.62 407.16,574.18 409.79,571.69 412.42,569.18 415.05,566.68 417.69,564.20 420.32,561.78 422.95,559.44 425.58,557.19 428.21,555.08 430.84,553.10 433.47,551.29 436.10,549.66 438.74,548.23 441.37,547.01 444.00,546.02 446.63,545.27 449.26,544.75 451.89,544.49 454.52,544.47 457.15,544.71 459.79,545.19 462.42,545.92 465.05,546.88 467.68,548.07 470.31,549.47 472.94,551.08 475.57,552.87 478.20,554.82 480.84,556.93 483.47,559.15 486.10,561.49 488.73,563.90 491.36,566.37 493.99,568.87 496.62,571.38 499.25,573.87 501.89,576.32 504.52,578.70 507.15,580.99 509.78,583.16 512.41,585.20 515.04,587.08 517.67,588.79 520.30,590.30 522.94,591.61 525.57,592.69 528.20,593.55 530.83,594.16 533.46,594.53 536.09,594.65 538.72,594.52 541.35,594.14 543.99,593.51 546.62,592.65 549.25,591.55 551.88,590.24 554.51,588.71 557.14,587.00 559.77,585.11 562.40,583.07 565.04,580.89 567.67,578.59 570.30,576.21 572.93,573.76 575.56,571.27 578.19,568.76 580.82,566.26 583.45,563.79 586.09,561.38 588.72,559.05 591.35,556.83 593.98,554.73 596.61,552.78 599.24,551.00 601.87,549.41 604.50,548.01 607.14,546.83 609.77,545.88 612.40,545.16 615.03,544.69 617.66,544.47 620.29,544.49 622.92,544.77 625.55,545.30 628.19,546.06 630.82,547.06 633.45,548.29 636.08,549.73 638.71,551.37 641.34,553.18 643.97,555.17 646.60,557.29 649.24,559.54 651.87,561.89 654.50,564.31 657.13,566.79 659.76,569.29 662.39,571.80 665.02,574.29 667.65,576.72 670.29,579.09 672.92,581.36 675.55,583.51 678.18,585.53 680.81,587.38 683.44,589.05 686.07,590.53 688.70,591.80 691.34,592.85 693.97,593.67 696.60,594.24 699.23,594.57 701.86,594.65 704.49,594.47 707.12,594.05 709.75,593.39 712.39,592.48 715.02,591.35 717.65,589.99 720.28,588.44" fill="none" stroke="#0000ff" stroke-width="1"/>
<rect x="277" y="86" width="9" height="9" fill="#ffffff" />
<rect x="278" y="87" width="7" height="7" fill="#000" />
<rect x="277" y="381" width="9" height="9" fill="#ffffff" />
<rect x="278" y="382" width="7" height="7" fill="#000" />
<rect x="277" y="676" width="9" height="9" fill="#ffffff" />
<rect x="278" y="677" width="7" height="7" fill="#000" />
<rect x="543" y="86" width="9" height="9" fill="#ffffff" />
<rect x="544" y="87" width="7" height="7" fill="#000" />
<rect x="543" y="676" width="9" height="9" fill="#ffffff" />
<rect x="544" y="677" width="7" height="7" fill="#000" />
<rect x="809" y="86" width="9" height="9" fill="#ffffff" />
<rect x="810" y="87" width="7" height="7" fill="#000" />
<rect x="809" y="381" width="9" height="9" fill="#ffffff" />
<rect x="810" y="382" width="7" height="7" fill="#000" />
<rect x="809" y="676" width="9" height="9" fill="#ffffff" />
<rect x="810" y="677" width="7" height="7" fill="#000" />
<rect x="6" y="86" width="266" height="1" fill="#ffffff" />
<rect x="6" y="684" width="266" height="1" fill="#ffffff" />
<rect x="6" y="86" width="1" height="599" fill="#ffffff" />
<rect x="271" y="86" width="1" height="599" fill="#ffffff" />
<rect x="5" y="85" width="266" height="1" fill="#716f64" />
<rect x="5" y="683" width="266" height="1" fill="#716f64" />
<rect x="5" y="85" width="1" height="599" fill="#716f64" />
<rect x="270" y="85" width="1" height="599" fill="#716f64" />
<text x="10.70" y="103.00" textLength="78.00" lengthAdjust="spacingAndGlyphs" fill="#808080" style="font-size:13px;font-style:italic;" >Figure Palette</text>
<rect x="139" y="100" width="2" height="2" fill="#fff"/><rect x="140" y="99" width="2" height="2" fill="#808080"/><rect x="142" y="97" width="2" height="2" fill="#fff"/><rect x="143" y="96" width="2" height="2" fill="#808080"/><rect x="145" y="100" width="2" height="2" fill="#fff"/><rect x="146" y="99" width="2" height="2" fill="#808080"/><rect x="148" y="97" width="2" height="2" fill="#fff"/><rect x="149" y="96" width="2" height="2" fill="#808080"/><rect x="151" y="100" width="2" height="2" fill="#fff"/><rect x="152" y="99" width="2" height="2" fill="#808080"/><rect x="154" y="97" width="2" height="2" fill="#fff"/><rect x="155" y="96" width="2" height="2" fill="#808080"/><rect x="157" y="100" width="2" height="2" fill="#fff"/><rect x="158" y="99" width="2" height="2" fill="#808080"/><rect x="160" y="97" width="2" height="2" fill="#fff"/><rect x="161" y="96" width="2" height="2" fill="#808080"/><rect x="163" y="100" width="2" height="2" fill="#fff"/><rect x="164" y="99" width="2" height="2" fill="#808080"/><rect x="166" y="97" width="2" height="2" fill="#fff"/><rect x="167" y="96" width="2" height="2" fill="#808080"/><rect x="169" y="100" width="2" height="2" fill="#fff"/><rect x="170" y="99" width="2" height="2" fill="#808080"/><rect x="172" y="97" width="2" height="2" fill="#fff"/><rect x="173" y="96" width="2" height="2" fill="#808080"/><rect x="175" y="100" width="2" height="2" fill="#fff"/><rect x="176" y="99" width="2" height="2" fill="#808080"/><rect x="178" y="97" width="2" height="2" fill="#fff"/><rect x="179" y="96" width="2" height="2" fill="#808080"/><rect x="181" y="100" width="2" height="2" fill="#fff"/><rect x="182" y="99" width="2" height="2" fill="#808080"/><rect x="184" y="97" width="2" height="2" fill="#fff"/><rect x="185" y="96" width="2" height="2" fill="#808080"/>

<rect x="194" y="95" width="2" height="5" fill="#000" />
<rect x="199" y="95" width="1" height="1" fill="#000"/><rect x="198" y="96" width="2" height="1" fill="#000"/><rect x="197" y="97" width="7" height="1" fill="#000"/><rect x="198" y="98" width="2" height="1" fill="#000"/><rect x="199" y="99" width="1" height="1" fill="#000"/>
<rect x="213" y="94" width="9" height="1" fill="#000" />
<rect x="213" y="102" width="9" height="1" fill="#000" />
<rect x="213" y="94" width="1" height="9" fill="#000" />
<rect x="221" y="94" width="1" height="9" fill="#000" />
<rect x="213" y="95" width="9" height="1" fill="#000" />
<rect x="234" y="95" width="5" height="1" fill="#000"/><rect x="235" y="96" width="4" height="1" fill="#000"/><rect x="235" y="97" width="4" height="1" fill="#000"/><rect x="234" y="98" width="3" height="1" fill="#000"/><rect x="238" y="98" width="1" height="1" fill="#000"/><rect x="234" y="99" width="2" height="1" fill="#000"/><rect x="238" y="99" width="1" height="1" fill="#000"/><rect x="234" y="100" width="1" height="1" fill="#000"/><rect x="235" y="101" width="1" height="1" fill="#000"/>
<rect x="252" y="95" width="2" height="1" fill="#000"/><rect x="258" y="95" width="2" height="1" fill="#000"/><rect x="253" y="96" width="2" height="1" fill="#000"/><rect x="257" y="96" width="2" height="1" fill="#000"/><rect x="254" y="97" width="4" height="1" fill="#000"/><rect x="255" y="98" width="2" height="1" fill="#000"/><rect x="254" y="99" width="4" height="1" fill="#000"/><rect x="253" y="100" width="2" height="1" fill="#000"/><rect x="257" y="100" width="2" height="1" fill="#000"/><rect x="252" y="101" width="2" height="1" fill="#000"/><rect x="258" y="101" width="2" height="1" fill="#000"/>
<rect x="10" y="109" width="258" height="1" fill="#ffffff" />
<rect x="10" y="680" width="258" height="1" fill="#ffffff" />
<rect x="10" y="109" width="1" height="572" fill="#ffffff" />
<rect x="267" y="109" width="1" height="572" fill="#ffffff" />
<rect x="9" y="108" width="258" height="1" fill="#8e8c84" />
<rect x="9" y="679" width="258" height="1" fill="#8e8c84" />
<rect x="9" y="108" width="1" height="572" fill="#8e8c84" />
<rect x="266" y="108" width="1" height="572" fill="#8e8c84" />
<rect x="11" y="110" width="255" height="569" fill="#ffffff" />
<rect x="11" y="678" width="255" height="1" fill="#ffffff" />
<rect x="265" y="110" width="1" height="569" fill="#ffffff" />
<rect x="12" y="677" width="253" height="1" fill="#d4d0c8" />
<rect x="264" y="111" width="1" height="567" fill="#d4d0c8" />
<rect x="11" y="110" width="254" height="1" fill="#808080" />
<rect x="11" y="110" width="1" height="568" fill="#808080" />
<rect x="12" y="111" width="252" height="1" fill="#404040" />
<rect x="12" y="111" width="1" height="566" fill="#404040" />
<rect x="14" y="113" width="249" height="27" fill="#d4d0c8" />
<rect x="14" y="113" width="249" height="1" fill="#ffffff" />
<rect x="14" y="113" width="1" height="27" fill="#ffffff" />
<rect x="13" y="139" width="250" height="1" fill="#8c8a84" />
<rect x="262" y="113" width="1" height="27" fill="#8c8a84" />
<rect x="17" y="124" width="11" height="1" fill="#000" />
<rect x="18" y="125" width="9" height="1" fill="#000" />
<rect x="19" y="126" width="7" height="1" fill="#000" />
<rect x="20" y="127" width="5" height="1" fill="#000" />
<rect x="21" y="128" width="3" height="1" fill="#000" />
<rect x="22" y="129" width="1" height="1" fill="#000" />
<text x="32.10" y="133.00" textLength="92.10" lengthAdjust="spacingAndGlyphs" fill="#000" style="font-size:16px;" >New Subplots</text>
<rect x="13" y="228" width="250" height="1" fill="#8c8a84" />
<rect x="14" y="229" width="249" height="27" fill="#d4d0c8" />
<rect x="14" y="229" width="249" height="1" fill="#ffffff" />
<rect x="14" y="229" width="1" height="27" fill="#ffffff" />
<rect x="13" y="255" width="250" height="1" fill="#8c8a84" />
<rect x="262" y="229" width="1" height="27" fill="#8c8a84" />
<rect x="17" y="240" width="11" height="1" fill="#000" />
<rect x="18" y="241" width="9" height="1" fill="#000" />
<rect x="19" y="242" width="7" height="1" fill="#000" />
<rect x="20" y="243" width="5" height="1" fill="#000" />
<rect x="21" y="244" width="3" height="1" fill="#000" />
<rect x="22" y="245" width="1" height="1" fill="#000" />
<text x="32.10" y="249.00" textLength="61.10" lengthAdjust="spacingAndGlyphs" fill="#000" style="font-size:16px;" >Variables</text>
<rect x="13" y="379" width="250" height="1" fill="#8c8a84" />
<rect x="14" y="380" width="249" height="27" fill="#d4d0c8" />
<rect x="14" y="380" width="249" height="1" fill="#ffffff" />
<rect x="14" y="380" width="1" height="27" fill="#ffffff" />
<rect x="13" y="406" width="250" height="1" fill="#8c8a84" />
<rect x="262" y="380" width="1" height="27" fill="#8c8a84" />
<rect x="17" y="391" width="11" height="1" fill="#000" />
<rect x="18" y="392" width="9" height="1" fill="#000" />
<rect x="19" y="393" width="7" height="1" fill="#000" />
<rect x="20" y="394" width="5" height="1" fill="#000" />
<rect x="21" y="395" width="3" height="1" fill="#000" />
<rect x="22" y="396" width="1" height="1" fill="#000" />
<text x="32.10" y="400.00" textLength="80.20" lengthAdjust="spacingAndGlyphs" fill="#000" style="font-size:16px;" >Annotations</text>
<rect x="19" y="148" width="18" height="1" fill="#000" />
<rect x="19" y="161" width="18" height="1" fill="#000" />
<rect x="19" y="148" width="1" height="14" fill="#000" />
<rect x="36" y="148" width="1" height="14" fill="#000" />
<rect x="18" y="148" width="1" height="1" fill="#000" />
<rect x="18" y="151" width="1" height="1" fill="#000" />
<rect x="18" y="154" width="1" height="1" fill="#000" />
<rect x="18" y="157" width="1" height="1" fill="#000" />
<rect x="18" y="160" width="1" height="1" fill="#000" />
<rect x="20" y="162" width="1" height="1" fill="#000" />
<rect x="24" y="162" width="1" height="1" fill="#000" />
<rect x="28" y="162" width="1" height="1" fill="#000" />
<rect x="32" y="162" width="1" height="1" fill="#000" />
<rect x="36" y="162" width="1" height="1" fill="#000" />
<text x="41.70" y="162.00" textLength="54.30" lengthAdjust="spacingAndGlyphs" fill="#000" style="font-size:16px;" >2D Axes</text>
<rect x="20" y="179" width="1" height="7" fill="#000" />
<rect x="19" y="179" width="1" height="1" fill="#000" />
<rect x="19" y="182" width="1" height="1" fill="#000" />
<rect x="19" y="185" width="1" height="1" fill="#000" />
<path d="M20.5 185.3 L28.4 189.4 L36.3 185.6" stroke="#000" stroke-width="1.1" fill="none"/>
<rect x="21" y="188" width="1" height="1" fill="#000" />
<rect x="24" y="190" width="1" height="1" fill="#000" />
<rect x="28" y="191" width="1" height="1" fill="#000" />
<rect x="32" y="190" width="1" height="1" fill="#000" />
<rect x="35" y="188" width="1" height="1" fill="#000" />
<text x="40.80" y="191.00" textLength="54.30" lengthAdjust="spacingAndGlyphs" fill="#000" style="font-size:16px;" >3D Axes</text>
<rect x="238" y="149" width="13" height="13" fill="#ffffff" />
<rect x="238" y="149" width="13" height="1" fill="#000" />
<rect x="238" y="161" width="13" height="1" fill="#000" />
<rect x="238" y="149" width="1" height="13" fill="#000" />
<rect x="250" y="149" width="1" height="13" fill="#000" />
<rect x="244" y="149" width="1" height="13" fill="#000" />
<rect x="238" y="155" width="13" height="1" fill="#000" />
<polygon points="256,152 256,159 259.8,155.5" fill="#000"/>
<rect x="238" y="178" width="13" height="13" fill="#ffffff" />
<rect x="238" y="178" width="13" height="1" fill="#000" />
<rect x="238" y="190" width="13" height="1" fill="#000" />
<rect x="238" y="178" width="1" height="13" fill="#000" />
<rect x="250" y="178" width="1" height="13" fill="#000" />
<rect x="244" y="178" width="1" height="13" fill="#000" />
<rect x="238" y="184" width="13" height="1" fill="#000" />
<polygon points="256,181 256,188 259.8,184.5" fill="#000"/>
<rect x="18" y="262" width="15" height="15" fill="#d8dce8" />
<rect x="17" y="261" width="15" height="15" fill="#344c94" />
<rect x="18" y="262" width="6" height="6" fill="url(#ycell)" />
<rect x="25" y="262" width="6" height="6" fill="url(#ycell)" />
<rect x="18" y="269" width="6" height="6" fill="url(#ycell)" />
<rect x="25" y="269" width="6" height="6" fill="url(#ycell)" />
<text x="35.50" y="276.00" textLength="16.70" lengthAdjust="spacingAndGlyphs" fill="#000" style="font-size:16px;" >X1</text>
<text x="125.20" y="276.00" textLength="38.30" lengthAdjust="spacingAndGlyphs" fill="#000" style="font-size:16px;" >1x126</text>
<rect x="18" y="283" width="15" height="15" fill="#d8dce8" />
<rect x="17" y="282" width="15" height="15" fill="#344c94" />
<rect x="18" y="283" width="6" height="6" fill="url(#ycell)" />
<rect x="25" y="283" width="6" height="6" fill="url(#ycell)" />
<rect x="18" y="290" width="6" height="6" fill="url(#ycell)" />
<rect x="25" y="290" width="6" height="6" fill="url(#ycell)" />
<text x="35.50" y="297.00" textLength="16.10" lengthAdjust="spacingAndGlyphs" fill="#000" style="font-size:16px;" >Y1</text>
<text x="125.20" y="297.00" textLength="38.30" lengthAdjust="spacingAndGlyphs" fill="#000" style="font-size:16px;" >1x126</text>
<rect x="18" y="304" width="15" height="15" fill="#d8dce8" />
<rect x="17" y="303" width="15" height="15" fill="#344c94" />
<rect x="18" y="304" width="6" height="6" fill="url(#ycell)" />
<rect x="25" y="304" width="6" height="6" fill="url(#ycell)" />
<rect x="18" y="311" width="6" height="6" fill="url(#ycell)" />
<rect x="25" y="311" width="6" height="6" fill="url(#ycell)" />
<text x="35.50" y="318.00" textLength="16.10" lengthAdjust="spacingAndGlyphs" fill="#000" style="font-size:16px;" >Y2</text>
<text x="125.20" y="318.00" textLength="38.30" lengthAdjust="spacingAndGlyphs" fill="#000" style="font-size:16px;" >1x126</text>
<rect x="18" y="325" width="15" height="15" fill="#d8dce8" />
<rect x="17" y="324" width="15" height="15" fill="#344c94" />
<rect x="18" y="325" width="6" height="6" fill="url(#ycell)" />
<rect x="25" y="325" width="6" height="6" fill="url(#ycell)" />
<rect x="18" y="332" width="6" height="6" fill="url(#ycell)" />
<rect x="25" y="332" width="6" height="6" fill="url(#ycell)" />
<text x="35.50" y="339.00" textLength="16.10" lengthAdjust="spacingAndGlyphs" fill="#000" style="font-size:16px;" >Y3</text>
<text x="125.20" y="339.00" textLength="38.30" lengthAdjust="spacingAndGlyphs" fill="#000" style="font-size:16px;" >1x126</text>
<rect x="18" y="346" width="15" height="15" fill="#d8dce8" />
<rect x="17" y="345" width="15" height="15" fill="#344c94" />
<rect x="18" y="346" width="6" height="6" fill="url(#ycell)" />
<rect x="25" y="346" width="6" height="6" fill="url(#ycell)" />
<rect x="18" y="353" width="6" height="6" fill="url(#ycell)" />
<rect x="25" y="353" width="6" height="6" fill="url(#ycell)" />
<text x="35.50" y="360.00" textLength="16.10" lengthAdjust="spacingAndGlyphs" fill="#000" style="font-size:16px;" >Y4</text>
<text x="125.20" y="360.00" textLength="38.30" lengthAdjust="spacingAndGlyphs" fill="#000" style="font-size:16px;" >1x126</text>
<path d="M18.7 414.6 L33.7 429.3" stroke="#000" stroke-width="1.2"/>
<text x="37.80" y="429.00" textLength="27.20" lengthAdjust="spacingAndGlyphs" fill="#000" style="font-size:16px;" >Line</text>
<path d="M18.5 443.5 L31 455.5" stroke="#000" stroke-width="1.2"/><polygon points="34,458.5 27,456 31.5,451.8" fill="#000"/>
<text x="37.40" y="458.00" textLength="41.00" lengthAdjust="spacingAndGlyphs" fill="#000" style="font-size:16px;" >Arrow</text>
<path d="M21 475.5 L31 484.5" stroke="#000" stroke-width="1.2"/><polygon points="34,487.5 27,485 31.5,480.8" fill="#000"/><polygon points="18.3,473 25.3,475.5 20.8,479.7" fill="#000"/>
<text x="38.20" y="487.00" textLength="93.20" lengthAdjust="spacingAndGlyphs" fill="#000" style="font-size:16px;" >Double Arrow</text>
<rect x="18" y="501" width="12" height="1" fill="#000" />
<rect x="18" y="506" width="12" height="1" fill="#000" />
<rect x="18" y="501" width="1" height="6" fill="#000" />
<rect x="29" y="501" width="1" height="6" fill="#000" />
<path d="M26 507 L31.5 513.5" stroke="#000" stroke-width="1.2"/><polygon points="34,516.5 27.5,514 32,510" fill="#000"/>
<text x="37.80" y="516.00" textLength="72.20" lengthAdjust="spacingAndGlyphs" fill="#000" style="font-size:16px;" >Text Arrow</text>
<text x="20.6" y="543" fill="#000" style="font-family:'Liberation Serif',serif;font-weight:bold;font-size:15px">T</text>
<text x="37.80" y="545.00" textLength="57.60" lengthAdjust="spacingAndGlyphs" fill="#000" style="font-size:16px;" >Text Box</text>
<rect x="18" y="560" width="16" height="1" fill="#000" />
<rect x="18" y="573" width="16" height="1" fill="#000" />
<rect x="18" y="560" width="1" height="14" fill="#000" />
<rect x="33" y="560" width="1" height="14" fill="#000" />
<text x="38.00" y="574.00" textLength="66.00" lengthAdjust="spacingAndGlyphs" fill="#000" style="font-size:16px;" >Rectangle</text>
<ellipse cx="26" cy="596.2" rx="7.7" ry="6.3" fill="none" stroke="#000" stroke-width="1.1"/>
<text x="38.00" y="603.00" textLength="43.00" lengthAdjust="spacingAndGlyphs" fill="#000" style="font-size:16px;" >Ellipse</text>
<rect x="56" y="82" width="84" height="23" fill="#000" />
<rect x="57" y="83" width="82" height="21" fill="#ffffe1" />
<text x="59.70" y="100.00" textLength="76.30" lengthAdjust="spacingAndGlyphs" fill="#000" style="font-size:16px;" >Save Figure</text>
<rect x="823" y="86" width="272" height="1" fill="#ffffff" />
<rect x="823" y="684" width="272" height="1" fill="#ffffff" />
<rect x="823" y="86" width="1" height="599" fill="#ffffff" />
<rect x="1094" y="86" width="1" height="599" fill="#ffffff" />
<rect x="822" y="85" width="272" height="1" fill="#716f64" />
<rect x="822" y="683" width="272" height="1" fill="#716f64" />
<rect x="822" y="85" width="1" height="599" fill="#716f64" />
<rect x="1093" y="85" width="1" height="599" fill="#716f64" />
<text x="827.60" y="103.00" textLength="69.70" lengthAdjust="spacingAndGlyphs" fill="#808080" style="font-size:13px;font-style:italic;" >Plot Browser</text>
<rect x="902" y="100" width="2" height="2" fill="#fff"/><rect x="903" y="99" width="2" height="2" fill="#808080"/><rect x="905" y="97" width="2" height="2" fill="#fff"/><rect x="906" y="96" width="2" height="2" fill="#808080"/><rect x="908" y="100" width="2" height="2" fill="#fff"/><rect x="909" y="99" width="2" height="2" fill="#808080"/><rect x="911" y="97" width="2" height="2" fill="#fff"/><rect x="912" y="96" width="2" height="2" fill="#808080"/><rect x="914" y="100" width="2" height="2" fill="#fff"/><rect x="915" y="99" width="2" height="2" fill="#808080"/><rect x="917" y="97" width="2" height="2" fill="#fff"/><rect x="918" y="96" width="2" height="2" fill="#808080"/><rect x="920" y="100" width="2" height="2" fill="#fff"/><rect x="921" y="99" width="2" height="2" fill="#808080"/><rect x="923" y="97" width="2" height="2" fill="#fff"/><rect x="924" y="96" width="2" height="2" fill="#808080"/><rect x="926" y="100" width="2" height="2" fill="#fff"/><rect x="927" y="99" width="2" height="2" fill="#808080"/><rect x="929" y="97" width="2" height="2" fill="#fff"/><rect x="930" y="96" width="2" height="2" fill="#808080"/><rect x="932" y="100" width="2" height="2" fill="#fff"/><rect x="933" y="99" width="2" height="2" fill="#808080"/><rect x="935" y="97" width="2" height="2" fill="#fff"/><rect x="936" y="96" width="2" height="2" fill="#808080"/><rect x="938" y="100" width="2" height="2" fill="#fff"/><rect x="939" y="99" width="2" height="2" fill="#808080"/><rect x="941" y="97" width="2" height="2" fill="#fff"/><rect x="942" y="96" width="2" height="2" fill="#808080"/><rect x="944" y="100" width="2" height="2" fill="#fff"/><rect x="945" y="99" width="2" height="2" fill="#808080"/><rect x="947" y="97" width="2" height="2" fill="#fff"/><rect x="948" y="96" width="2" height="2" fill="#808080"/><rect x="950" y="100" width="2" height="2" fill="#fff"/><rect x="951" y="99" width="2" height="2" fill="#808080"/><rect x="953" y="97" width="2" height="2" fill="#fff"/><rect x="954" y="96" width="2" height="2" fill="#808080"/><rect x="956" y="100" width="2" height="2" fill="#fff"/><rect x="957" y="99" width="2" height="2" fill="#808080"/><rect x="959" y="97" width="2" height="2" fill="#fff"/><rect x="960" y="96" width="2" height="2" fill="#808080"/><rect x="962" y="100" width="2" height="2" fill="#fff"/><rect x="963" y="99" width="2" height="2" fill="#808080"/><rect x="965" y="97" width="2" height="2" fill="#fff"/><rect x="966" y="96" width="2" height="2" fill="#808080"/><rect x="968" y="100" width="2" height="2" fill="#fff"/><rect x="969" y="99" width="2" height="2" fill="#808080"/><rect x="971" y="97" width="2" height="2" fill="#fff"/><rect x="972" y="96" width="2" height="2" fill="#808080"/><rect x="974" y="100" width="2" height="2" fill="#fff"/><rect x="975" y="99" width="2" height="2" fill="#808080"/><rect x="977" y="97" width="2" height="2" fill="#fff"/><rect x="978" y="96" width="2" height="2" fill="#808080"/><rect x="980" y="100" width="2" height="2" fill="#fff"/><rect x="981" y="99" width="2" height="2" fill="#808080"/><rect x="983" y="97" width="2" height="2" fill="#fff"/><rect x="984" y="96" width="2" height="2" fill="#808080"/><rect x="986" y="100" width="2" height="2" fill="#fff"/><rect x="987" y="99" width="2" height="2" fill="#808080"/><rect x="989" y="97" width="2" height="2" fill="#fff"/><rect x="990" y="96" width="2" height="2" fill="#808080"/><rect x="992" y="100" width="2" height="2" fill="#fff"/><rect x="993" y="99" width="2" height="2" fill="#808080"/><rect x="995" y="97" width="2" height="2" fill="#fff"/><rect x="996" y="96" width="2" height="2" fill="#808080"/><rect x="998" y="100" width="2" height="2" fill="#fff"/><rect x="999" y="99" width="2" height="2" fill="#808080"/><rect x="1001" y="97" width="2" height="2" fill="#fff"/><rect x="1002" y="96" width="2" height="2" fill="#808080"/><rect x="1004" y="100" width="2" height="2" fill="#fff"/><rect x="1005" y="99" width="2" height="2" fill="#808080"/><rect x="1007" y="97" width="2" height="2" fill="#fff"/><rect x="1008" y="96" width="2" height="2" fill="#808080"/>
<rect x="1021" y="95" width="1" height="1" fill="#000"/><rect x="1021" y="96" width="2" height="1" fill="#000"/><rect x="1017" y="97" width="7" height="1" fill="#000"/><rect x="1021" y="98" width="2" height="1" fill="#000"/><rect x="1021" y="99" width="1" height="1" fill="#000"/>
<rect x="1025" y="95" width="2" height="5" fill="#000" />
<rect x="1036" y="94" width="9" height="1" fill="#000" />
<rect x="1036" y="102" width="9" height="1" fill="#000" />
<rect x="1036" y="94" width="1" height="9" fill="#000" />
<rect x="1044" y="94" width="1" height="9" fill="#000" />
<rect x="1036" y="95" width="9" height="1" fill="#000" />
<rect x="1057" y="95" width="5" height="1" fill="#000"/><rect x="1058" y="96" width="4" height="1" fill="#000"/><rect x="1058" y="97" width="4" height="1" fill="#000"/><rect x="1057" y="98" width="3" height="1" fill="#000"/><rect x="1061" y="98" width="1" height="1" fill="#000"/><rect x="1057" y="99" width="2" height="1" fill="#000"/><rect x="1061" y="99" width="1" height="1" fill="#000"/><rect x="1057" y="100" width="1" height="1" fill="#000"/><rect x="1058" y="101" width="1" height="1" fill="#000"/>
<rect x="1075" y="95" width="2" height="1" fill="#000"/><rect x="1081" y="95" width="2" height="1" fill="#000"/><rect x="1076" y="96" width="2" height="1" fill="#000"/><rect x="1080" y="96" width="2" height="1" fill="#000"/><rect x="1077" y="97" width="4" height="1" fill="#000"/><rect x="1078" y="98" width="2" height="1" fill="#000"/><rect x="1077" y="99" width="4" height="1" fill="#000"/><rect x="1076" y="100" width="2" height="1" fill="#000"/><rect x="1080" y="100" width="2" height="1" fill="#000"/><rect x="1075" y="101" width="2" height="1" fill="#000"/><rect x="1081" y="101" width="2" height="1" fill="#000"/>
<rect x="827" y="109" width="262" height="570" fill="#ffffff" />
<rect x="826" y="108" width="264" height="1" fill="#a8a8a8" />
<rect x="826" y="679" width="264" height="1" fill="#a8a8a8" />
<rect x="826" y="108" width="1" height="572" fill="#a8a8a8" />
<rect x="1089" y="108" width="1" height="572" fill="#a8a8a8" />
<rect x="827" y="680" width="264" height="1" fill="#ffffff" />
<rect x="1090" y="109" width="1" height="572" fill="#ffffff" />
<rect x="831" y="117" width="13" height="13" fill="#ffffff" />
<rect x="831" y="117" width="12" height="1" fill="#808080" />
<rect x="831" y="117" width="1" height="12" fill="#808080" />
<rect x="832" y="118" width="10" height="1" fill="#404040" />
<rect x="832" y="118" width="1" height="10" fill="#404040" />
<rect x="832" y="128" width="11" height="1" fill="#d4d0c8" />
<rect x="842" y="118" width="1" height="11" fill="#d4d0c8" />
<rect x="834" y="122" width="1" height="3" fill="#000" />
<rect x="835" y="123" width="1" height="3" fill="#000" />
<rect x="836" y="124" width="1" height="3" fill="#000" />
<rect x="837" y="123" width="1" height="3" fill="#000" />
<rect x="838" y="122" width="1" height="3" fill="#000" />
<rect x="839" y="121" width="1" height="3" fill="#000" />
<rect x="840" y="120" width="1" height="3" fill="#000" />
<text x="847.50" y="130.00" textLength="97.50" lengthAdjust="spacingAndGlyphs" fill="#000" style="font-size:16px;" >Graph of sin(x)</text>
<rect x="831" y="140" width="13" height="13" fill="#ffffff" />
<rect x="831" y="140" width="12" height="1" fill="#808080" />
<rect x="831" y="140" width="1" height="12" fill="#808080" />
<rect x="832" y="141" width="10" height="1" fill="#404040" />
<rect x="832" y="141" width="1" height="10" fill="#404040" />
<rect x="832" y="151" width="11" height="1" fill="#d4d0c8" />
<rect x="842" y="141" width="1" height="11" fill="#d4d0c8" />
<rect x="834" y="145" width="1" height="3" fill="#000" />
<rect x="835" y="146" width="1" height="3" fill="#000" />
<rect x="836" y="147" width="1" height="3" fill="#000" />
<rect x="837" y="146" width="1" height="3" fill="#000" />
<rect x="838" y="145" width="1" height="3" fill="#000" />
<rect x="839" y="144" width="1" height="3" fill="#000" />
<rect x="840" y="143" width="1" height="3" fill="#000" />
<rect x="858" y="146" width="20" height="1" fill="#0000ff" />
<text x="882.30" y="153.00" textLength="54.50" lengthAdjust="spacingAndGlyphs" fill="#000" style="font-size:16px;" >Y1 vs X1</text>
<rect x="831" y="186" width="13" height="13" fill="#ffffff" />
<rect x="831" y="186" width="12" height="1" fill="#808080" />
<rect x="831" y="186" width="1" height="12" fill="#808080" />
<rect x="832" y="187" width="10" height="1" fill="#404040" />
<rect x="832" y="187" width="1" height="10" fill="#404040" />
<rect x="832" y="197" width="11" height="1" fill="#d4d0c8" />
<rect x="842" y="187" width="1" height="11" fill="#d4d0c8" />
<rect x="834" y="191" width="1" height="3" fill="#000" />
<rect x="835" y="192" width="1" height="3" fill="#000" />
<rect x="836" y="193" width="1" height="3" fill="#000" />
<rect x="837" y="192" width="1" height="3" fill="#000" />
<rect x="838" y="191" width="1" height="3" fill="#000" />
<rect x="839" y="190" width="1" height="3" fill="#000" />
<rect x="840" y="189" width="1" height="3" fill="#000" />
<text x="847.50" y="199.00" textLength="101.10" lengthAdjust="spacingAndGlyphs" fill="#000" style="font-size:16px;" >Graph of cos(x)</text>
<rect x="831" y="209" width="13" height="13" fill="#ffffff" />
<rect x="831" y="209" width="12" height="1" fill="#808080" />
<rect x="831" y="209" width="1" height="12" fill="#808080" />
<rect x="832" y="210" width="10" height="1" fill="#404040" />
<rect x="832" y="210" width="1" height="10" fill="#404040" />
<rect x="832" y="220" width="11" height="1" fill="#d4d0c8" />
<rect x="842" y="210" width="1" height="11" fill="#d4d0c8" />
<rect x="834" y="214" width="1" height="3" fill="#000" />
<rect x="835" y="215" width="1" height="3" fill="#000" />
<rect x="836" y="216" width="1" height="3" fill="#000" />
<rect x="837" y="215" width="1" height="3" fill="#000" />
<rect x="838" y="214" width="1" height="3" fill="#000" />
<rect x="839" y="213" width="1" height="3" fill="#000" />
<rect x="840" y="212" width="1" height="3" fill="#000" />
<rect x="858" y="215" width="20" height="1" fill="#0000ff" />
<text x="882.30" y="222.00" textLength="54.50" lengthAdjust="spacingAndGlyphs" fill="#000" style="font-size:16px;" >Y2 vs X1</text>
<rect x="831" y="255" width="13" height="13" fill="#ffffff" />
<rect x="831" y="255" width="12" height="1" fill="#808080" />
<rect x="831" y="255" width="1" height="12" fill="#808080" />
<rect x="832" y="256" width="10" height="1" fill="#404040" />
<rect x="832" y="256" width="1" height="10" fill="#404040" />
<rect x="832" y="266" width="11" height="1" fill="#d4d0c8" />
<rect x="842" y="256" width="1" height="11" fill="#d4d0c8" />
<rect x="834" y="260" width="1" height="3" fill="#000" />
<rect x="835" y="261" width="1" height="3" fill="#000" />
<rect x="836" y="262" width="1" height="3" fill="#000" />
<rect x="837" y="261" width="1" height="3" fill="#000" />
<rect x="838" y="260" width="1" height="3" fill="#000" />
<rect x="839" y="259" width="1" height="3" fill="#000" />
<rect x="840" y="258" width="1" height="3" fill="#000" />
<text x="847.50" y="268.00" textLength="146.50" lengthAdjust="spacingAndGlyphs" fill="#000" style="font-size:16px;" >Graph of sin(x)+cos(x)</text>
<rect x="831" y="278" width="13" height="13" fill="#ffffff" />
<rect x="831" y="278" width="12" height="1" fill="#808080" />
<rect x="831" y="278" width="1" height="12" fill="#808080" />
<rect x="832" y="279" width="10" height="1" fill="#404040" />
<rect x="832" y="279" width="1" height="10" fill="#404040" />
<rect x="832" y="289" width="11" height="1" fill="#d4d0c8" />
<rect x="842" y="279" width="1" height="11" fill="#d4d0c8" />
<rect x="834" y="283" width="1" height="3" fill="#000" />
<rect x="835" y="284" width="1" height="3" fill="#000" />
<rect x="836" y="285" width="1" height="3" fill="#000" />
<rect x="837" y="284" width="1" height="3" fill="#000" />
<rect x="838" y="283" width="1" height="3" fill="#000" />
<rect x="839" y="282" width="1" height="3" fill="#000" />
<rect x="840" y="281" width="1" height="3" fill="#000" />
<rect x="858" y="284" width="20" height="1" fill="#0000ff" />
<text x="882.30" y="291.00" textLength="54.50" lengthAdjust="spacingAndGlyphs" fill="#000" style="font-size:16px;" >Y3 vs X1</text>
<rect x="831" y="324" width="13" height="13" fill="#ffffff" />
<rect x="831" y="324" width="12" height="1" fill="#808080" />
<rect x="831" y="324" width="1" height="12" fill="#808080" />
<rect x="832" y="325" width="10" height="1" fill="#404040" />
<rect x="832" y="325" width="1" height="10" fill="#404040" />
<rect x="832" y="335" width="11" height="1" fill="#d4d0c8" />
<rect x="842" y="325" width="1" height="11" fill="#d4d0c8" />
<rect x="834" y="329" width="1" height="3" fill="#000" />
<rect x="835" y="330" width="1" height="3" fill="#000" />
<rect x="836" y="331" width="1" height="3" fill="#000" />
<rect x="837" y="330" width="1" height="3" fill="#000" />
<rect x="838" y="329" width="1" height="3" fill="#000" />
<rect x="839" y="328" width="1" height="3" fill="#000" />
<rect x="840" y="327" width="1" height="3" fill="#000" />
<text x="847.50" y="337.00" textLength="142.40" lengthAdjust="spacingAndGlyphs" fill="#000" style="font-size:16px;" >Graph of sin(x)-cos(x)</text>
<rect x="831" y="347" width="13" height="13" fill="#ffffff" />
<rect x="831" y="347" width="12" height="1" fill="#808080" />
<rect x="831" y="347" width="1" height="12" fill="#808080" />
<rect x="832" y="348" width="10" height="1" fill="#404040" />
<rect x="832" y="348" width="1" height="10" fill="#404040" />
<rect x="832" y="358" width="11" height="1" fill="#d4d0c8" />
<rect x="842" y="348" width="1" height="11" fill="#d4d0c8" />
<rect x="834" y="352" width="1" height="3" fill="#000" />
<rect x="835" y="353" width="1" height="3" fill="#000" />
<rect x="836" y="354" width="1" height="3" fill="#000" />
<rect x="837" y="353" width="1" height="3" fill="#000" />
<rect x="838" y="352" width="1" height="3" fill="#000" />
<rect x="839" y="351" width="1" height="3" fill="#000" />
<rect x="840" y="350" width="1" height="3" fill="#000" />
<rect x="858" y="353" width="20" height="1" fill="#0000ff" />
<text x="882.30" y="360.00" textLength="54.50" lengthAdjust="spacingAndGlyphs" fill="#000" style="font-size:16px;" >Y4 vs X1</text>
<rect x="980" y="646" width="107" height="31" fill="#d4d0c8" />
<rect x="980" y="646" width="107" height="1" fill="#ffffff" />
<rect x="980" y="646" width="1" height="31" fill="#ffffff" />
<rect x="980" y="676" width="107" height="1" fill="#404040" />
<rect x="1086" y="646" width="1" height="31" fill="#404040" />
<rect x="981" y="675" width="105" height="1" fill="#808080" />
<rect x="1085" y="647" width="1" height="29" fill="#808080" />
<text x="997.60" y="669.00" textLength="73.80" lengthAdjust="spacingAndGlyphs" fill="#fff" style="font-size:16px;" >Add Data...</text>
<text x="996.60" y="668.00" textLength="73.80" lengthAdjust="spacingAndGlyphs" fill="#8c8c8c" style="font-size:16px;" >Add Data...</text>
<rect x="5" y="685" width="116" height="25" fill="url(#tabg)" />
<rect x="120" y="685" width="1" height="25" fill="#8c8a84" />
<text x="12.70" y="704.00" textLength="100.70" lengthAdjust="spacingAndGlyphs" fill="#4a4a4a" style="font-size:16px;" >Property Editor</text>
<rect x="5" y="710" width="1090" height="1" fill="#808080" />
<rect x="5" y="711" width="1090" height="1" fill="#ffffff" />
<g stroke-width="1" class="ce"><path d="M1083 741 L1094 730" stroke="#808080"/><path d="M1082 741 L1094 729" stroke="#fff"/><path d="M1087 741 L1094 734" stroke="#808080"/><path d="M1086 741 L1094 733" stroke="#fff"/><path d="M1091 741 L1094 738" stroke="#808080"/><path d="M1090 741 L1094 737" stroke="#fff"/></g>
<rect x="0" y="744" width="52" height="7" fill="#ffffff" />
<rect x="52" y="744" width="1047" height="7" fill="#d4d0c8" />
<rect x="58" y="744" width="1" height="7" fill="#0a246a" />
<rect x="59" y="744" width="1" height="7" fill="#0a246a" />
<rect x="56" y="744" width="1" height="7" fill="#ffffff" />
<text x="66.20" y="756.50" textLength="46.20" lengthAdjust="spacingAndGlyphs" fill="#000" style="font-size:16px;" >Colors:</text>
<rect x="126" y="744" width="1" height="7" fill="#ffffff" />
<rect x="159" y="744" width="1" height="7" fill="#808080" />
<rect x="160" y="744" width="1" height="7" fill="#ffffff" />
<rect x="210" y="744" width="1" height="7" fill="#808080" />
<polygon points="149.5,748 155.5,748 152.5,751" fill="#000"/><polygon points="199,748 205,748 202,751" fill="#000"/>
<polygon points="126,746 131,743 136,747.5 131,751.5" fill="#fff" stroke="#000" stroke-width="1"/><rect x="135" y="744" width="3" height="4" fill="#0a246a"/><path d="M171 750.5 l9 -6.5" stroke="#000" stroke-width="2.5" fill="none"/>
<rect x="401" y="744" width="1" height="7" fill="#ffffff" />
<rect x="402" y="744" width="1" height="7" fill="#404040" />
<rect x="403" y="744" width="1" height="7" fill="#808080" />
<rect x="468" y="749" width="205" height="1" fill="#404040" />
<rect x="468" y="750" width="205" height="1" fill="#808080" />
<rect x="697" y="749" width="201" height="1" fill="#404040" />
<rect x="697" y="750" width="201" height="1" fill="#808080" />
<rect x="965" y="744" width="1" height="7" fill="#ffffff" />
<rect x="984" y="744" width="1" height="7" fill="#404040" />
<rect x="985" y="744" width="1" height="7" fill="#808080" />
<rect x="986" y="744" width="1" height="7" fill="#ffffff" />
<rect x="1041" y="39" width="2" height="1" fill="#000"/><rect x="1040" y="40" width="1" height="1" fill="#000"/><rect x="1042" y="40" width="2" height="1" fill="#000"/><rect x="1046" y="40" width="1" height="1" fill="#000"/><rect x="1042" y="41" width="3" height="1" fill="#000"/><rect x="1046" y="41" width="1" height="1" fill="#000"/><rect x="1043" y="42" width="4" height="1" fill="#000"/><rect x="1042" y="43" width="5" height="1" fill="#000"/>
<rect x="1064" y="39" width="5" height="1" fill="#000"/><rect x="1065" y="40" width="4" height="1" fill="#000"/><rect x="1065" y="41" width="4" height="1" fill="#000"/><rect x="1064" y="42" width="3" height="1" fill="#000"/><rect x="1068" y="42" width="1" height="1" fill="#000"/><rect x="1064" y="43" width="2" height="1" fill="#000"/><rect x="1068" y="43" width="1" height="1" fill="#000"/><rect x="1064" y="44" width="1" height="1" fill="#000"/><rect x="1065" y="45" width="1" height="1" fill="#000"/>
<rect x="1080" y="39" width="2" height="1" fill="#000"/><rect x="1086" y="39" width="2" height="1" fill="#000"/><rect x="1081" y="40" width="2" height="1" fill="#000"/><rect x="1085" y="40" width="2" height="1" fill="#000"/><rect x="1082" y="41" width="4" height="1" fill="#000"/><rect x="1083" y="42" width="2" height="1" fill="#000"/><rect x="1082" y="43" width="4" height="1" fill="#000"/><rect x="1081" y="44" width="2" height="1" fill="#000"/><rect x="1085" y="44" width="2" height="1" fill="#000"/><rect x="1080" y="45" width="2" height="1" fill="#000"/><rect x="1086" y="45" width="2" height="1" fill="#000"/>
</g>
</svg>
</body></html>
